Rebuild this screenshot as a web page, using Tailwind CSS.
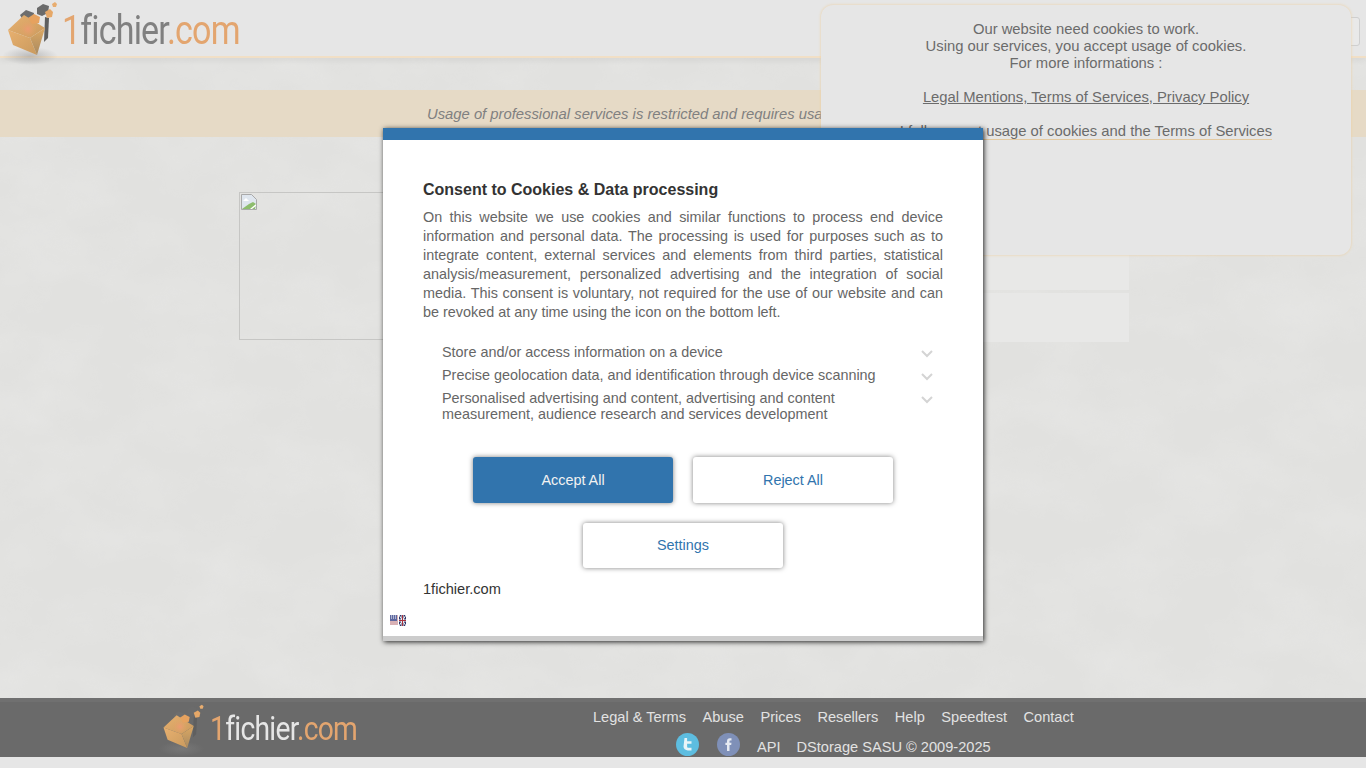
<!DOCTYPE html>
<html lang="en">
<head>
  <meta charset="UTF-8" />
  <title>1fichier.com</title>
  <script src="https://cdn.jsdelivr.net/npm/@tailwindcss/browser@4"></script>
</head>
<body class="relative h-[768px] w-[1366px] overflow-hidden bg-[#e1e1df] font-['Liberation_Sans',sans-serif] text-[15px] text-[#666]">

  <!-- cube logo, used in header and footer -->
  <svg class="absolute h-0 w-0">
    <defs>
      <linearGradient id="cubeLeft" x1="0" y1="0" x2="1" y2="1">
        <stop offset="0" stop-color="#e8b06f" />
        <stop offset="1" stop-color="#c99a5e" />
      </linearGradient>
      <linearGradient id="cubeRight" x1="0" y1="0" x2="0" y2="1">
        <stop offset="0" stop-color="#dca863" />
        <stop offset="1" stop-color="#a98a60" />
      </linearGradient>
      <radialGradient id="cubeGlow">
        <stop offset="0" stop-color="#ec9b72" />
        <stop offset="1" stop-color="#e3a566" stop-opacity="0" />
      </radialGradient>
      <radialGradient id="cubeShadow">
        <stop offset="0" stop-color="#888" stop-opacity=".45" />
        <stop offset="1" stop-color="#888" stop-opacity="0" />
      </radialGradient>
    </defs>
    <symbol id="cube" viewBox="0 0 60 66">
      <ellipse cx="30" cy="56" rx="28" ry="9" fill="url(#cubeShadow)" />
      <path d="M45 17l4 1-1 20-4 4z" fill="#5f5f5f" />
      <path d="M20 15l6-5 8 3-1 7-9 2z" fill="#6d6d6d" />
      <path d="M37 8l6-4 6 2-1 7-6 3-5-2z" fill="#6b6b6b" />
      <path d="M8 30l16-15 21 13-15 10z" fill="url(#cubeLeft)" />
      <path d="M8 30l22 8 7 17-24-10z" fill="url(#cubeLeft)" />
      <path d="M30 38l15-10-8 27z" fill="url(#cubeRight)" />
      <circle cx="28" cy="29" r="9" fill="url(#cubeGlow)" />
      <path d="M28 18l6-4 6 3-1 6-7 1z" fill="#e6a25f" />
      <path d="M45 12l5-3 3 3-1 5-5 1z" fill="#e6a868" />
      <path d="M52 4l3-2 2 2-1 3-3 0z" fill="#e8ad70" />
    </symbol>
  </svg>

  <!-- blotchy page background -->
  <svg class="absolute inset-0 h-[768px] w-[1366px]">
    <filter id="clouds">
      <feTurbulence type="fractalNoise" baseFrequency="0.012 0.018" numOctaves="4" seed="7" />
      <feColorMatrix values="0 0 0 0 1  0 0 0 0 1  0 0 0 0 1  0.9 0 0 0 -0.32" />
    </filter>
    <rect width="1366" height="698" filter="url(#clouds)" opacity=".3" />
  </svg>

  <div class="relative flex h-[768px] flex-col">
    <!-- header -->
    <header class="relative flex h-[58px] shrink-0 border-b-2 border-[#f1dfc6] bg-[#e6e6e6] shadow-[0_3px_6px_rgba(0,0,0,0.05)]">
      <svg class="absolute top-0 left-0 h-[66px] w-[60px]"><use href="#cube" /></svg>
      <a class="absolute top-[5px] left-[62px] block origin-left scale-x-[0.83] font-['Roboto',sans-serif] text-[41px] leading-[50px] tracking-[-1px] whitespace-nowrap text-[#808080]"><span class="text-[#e3a56f]">1</span>fichier<span class="text-[#e3a56f]">.com</span></a>
      <div class="absolute top-[17px] left-[1340px] h-[29px] w-[20px] rounded-[3px] border border-[#cfcfcf] bg-[#e9e9e9]"></div>
    </header>

    <!-- professional services notice -->
    <div class="mt-[32px] h-[47px] shrink-0 bg-[#e6dac6] pl-[427px] text-[14.8px] leading-[49px] whitespace-nowrap text-[#808080] italic">
      Usage of professional services is restricted and requires usage
    </div>

    <!-- download area behind the dialogs -->
    <main class="ml-[239px] flex h-[561px] items-start pt-[55px]">
      <div class="h-[148px] w-[170px] border border-[#c6c6c4] p-px">
        <svg width="16" height="16" viewBox="0 0 16 16">
          <path d="M.5.5h10l5 5v10H.5z" fill="#dfe6ee" stroke="#a9a9a9" />
          <path d="M1 15l7-5 4-2 3 2-1 5z" fill="#8dbd6d" />
          <path d="M2 7l3-3 3 3z" fill="#fff" />
          <path d="M9 15l6-5v2l-4 3z" fill="#fff" />
        </svg>
      </div>
      <div class="ml-[574px] flex w-[146px] flex-col gap-[3px]">
        <div class="h-[98px] bg-[#e8e8e7]"></div>
        <div class="h-[49px] bg-[#e8e8e7]"></div>
      </div>
    </main>

    <!-- footer -->
    <footer class="relative flex h-[59px] shrink-0 overflow-hidden border-t-[4px] border-[#707070] bg-[#6a6a6a] text-[#e2e2e2]">
      <svg class="absolute top-[1px] left-[157px] h-[54px] w-[49px]" viewBox="0 0 60 66"><use href="#cube" /></svg>
      <a class="absolute top-[6px] left-[210px] origin-left scale-x-[0.83] font-['Roboto',sans-serif] text-[34px] leading-[40px] tracking-[-0.85px] whitespace-nowrap text-[#e6e6e6]"><span class="text-[#e3a56f]">1</span>fichier<span class="text-[#e3a56f]">.com</span></a>
      <div class="ml-[593px] w-[500px] text-[14.6px]">
        <nav class="flex h-[32px] gap-[16.5px] pt-[5px] leading-[20px]">
          <a>Legal &amp; Terms</a><a>Abuse</a><a>Prices</a><a>Resellers</a><a>Help</a><a>Speedtest</a><a>Contact</a>
        </nav>
        <div class="ml-[83px] flex -mt-px items-start">
          <svg class="shrink-0" width="23" height="23" viewBox="0 0 23 23">
            <circle cx="11.5" cy="11.5" r="11.5" fill="#5dbde0" />
            <path d="M8.5 5h2.6v3.3h4.4v2.5h-4.4v2.6c0 1 .6 1.4 1.5 1.4h2.9v2.6h-3.6c-2.6 0-4.4-1.4-4.4-3.8z" fill="#e8f4f8" />
          </svg>
          <svg class="ml-[18px] shrink-0" width="23" height="23" viewBox="0 0 23 23">
            <circle cx="11.5" cy="11.5" r="11.5" fill="#7f90b8" />
            <path d="M10 18v-6H8.4V9.8H10V8.2C10 6.300 11 5.300 12.800 5.300h1.700v2.200h-1.100c-.7 0-.9.300-.9.900v1.400h2l-.3 2.200h-1.700v6z" fill="#e6eaf2" />
          </svg>
          <span class="ml-[17px] pt-[4px] leading-[20px]">API</span>
          <span class="ml-[16px] pt-[4px] leading-[20px]">DStorage SASU © 2009-2025</span>
        </div>
      </div>
    </footer>
    <div class="h-[11px] shrink-0 bg-[#e6e6e6]"></div>
  </div>

  <!-- cookie notice -->
  <div class="absolute top-[5px] left-[821px] h-[250px] w-[530px] rounded-[12px] bg-[#e6e6e6] pt-[16px] text-center text-[14.8px] leading-[17px] text-[#6b6b6b] shadow-[0_0_3px_#edcf9f]">
    Our website need cookies to work.<br />
    Using our services, you accept usage of cookies.<br />
    For more informations :<br /><br />
    <a class="underline">Legal Mentions, Terms of Services, Privacy Policy</a><br /><br />
    <a class="border-b border-[#e3c9a0]">I fully accept usage of cookies and the Terms of Services</a>
  </div>

  <!-- consent dialog -->
  <div class="absolute top-[128px] left-[383px] flex h-[513px] w-[600px] flex-col border-t-[12px] border-b-[5px] border-t-[#3174ad] border-b-[#cccccc] bg-white shadow-[1px_1px_5px_rgba(0,0,0,0.85)]">
    <div class="px-[40px] pt-[40px]">
      <h2 class="text-[16px] leading-[19px] font-bold text-[#333]">Consent to Cookies &amp; Data processing</h2>
      <p class="mt-[9px] text-justify text-[14.4px] leading-[19px] text-[#666]">On this website we use cookies and similar functions to process end device information and personal data. The processing is used for purposes such as to integrate content, external services and elements from third parties, statistical analysis/measurement, personalized advertising and the integration of social media. This consent is voluntary, not required for the use of our website and can be revoked at any time using the icon on the bottom left.</p>
      <ul class="mt-[22px] flex flex-col gap-[7px] pl-[19px] text-[14.4px] leading-[16px] text-[#666]">
        <li class="flex justify-between pr-[10px]"><span>Store and/or access information on a device</span><svg class="mt-[6px] shrink-0" width="12" height="8" viewBox="0 0 12 8"><path d="M1 1l5 5 5-5" fill="none" stroke="#d4d4d4" stroke-width="2" /></svg></li>
        <li class="flex justify-between pr-[10px]"><span>Precise geolocation data, and identification through device scanning</span><svg class="mt-[6px] shrink-0" width="12" height="8" viewBox="0 0 12 8"><path d="M1 1l5 5 5-5" fill="none" stroke="#d4d4d4" stroke-width="2" /></svg></li>
        <li class="flex justify-between pr-[10px]"><span class="w-[420px]">Personalised advertising and content, advertising and content measurement, audience research and services development</span><svg class="mt-[6px] shrink-0" width="12" height="8" viewBox="0 0 12 8"><path d="M1 1l5 5 5-5" fill="none" stroke="#d4d4d4" stroke-width="2" /></svg></li>
      </ul>
      <div class="mt-[35px] flex justify-center gap-[20px]">
        <button class="h-[46px] w-[200px] rounded-[3px] bg-[#3174ad] pt-px text-[14.4px] text-[#f2f2f2] shadow-[0_0_5px_rgba(0,0,0,0.5)]">Accept All</button>
        <button class="h-[46px] w-[200px] rounded-[3px] bg-white pt-px text-[14.4px] text-[#3174ad] shadow-[0_0_5px_rgba(0,0,0,0.5)]">Reject All</button>
      </div>
      <div class="mt-[20px] flex justify-center">
        <button class="h-[45px] w-[200px] rounded-[3px] bg-white pt-px text-[14.4px] text-[#3174ad] shadow-[0_0_5px_rgba(0,0,0,0.5)]">Settings</button>
      </div>
      <p class="mt-[12px] text-[14.6px] leading-[18px] text-[#333]">1fichier.com</p>
    </div>
    <svg class="absolute bottom-[10px] left-[7px]" width="16" height="11" viewBox="0 0 16 11">
      <rect width="8" height="11" fill="#fff" />
      <path d="M0 1h8M0 3h8M0 5h8M0 7h8M0 9h8" stroke="#b2626a" />
      <rect width="7" height="6" fill="#5d68a0" />
      <path d="M1 1h1M3 1h1M5 1h1M1 3h1M3 3h1M5 3h1" stroke="#fff" />
      <rect x="9" width="7" height="11" fill="#2c3468" />
      <path d="M9 0l7 11M16 0L9 11" stroke="#fff" />
      <path d="M12.500 0v11M9 5.500h7" stroke="#fff" stroke-width="2" />
      <path d="M12.500 0v11M9 5.500h7" stroke="#a8323c" />
    </svg>
  </div>
</body>
</html>
